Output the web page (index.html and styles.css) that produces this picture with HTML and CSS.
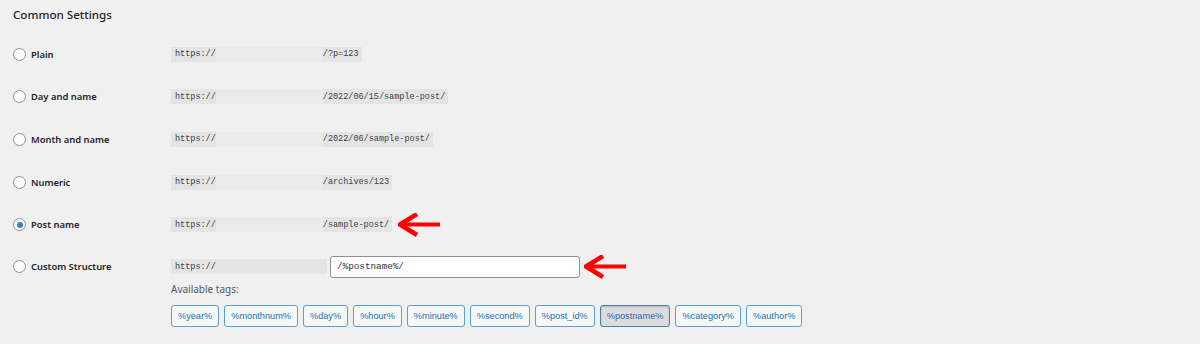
FILE: index.html
```html
<!DOCTYPE html>
<html lang="en">
<head>
    <meta charset="UTF-8">
    <meta name="viewport" content="width=device-width, initial-scale=1.0">
    <title>Permalink Settings</title>
    <link rel="stylesheet" href="styles.css">
</head>
<body>
    <div class="wrap">
        <h2 class="title">Common Settings</h2>

        <div class="row">
            <label class="choice"><span class="radio"></span>Plain</label>
            <code class="url">https://<span class="host"></span>/?p=123</code>
        </div>

        <div class="row">
            <label class="choice"><span class="radio"></span>Day and name</label>
            <code class="url">https://<span class="host"></span>/2022/06/15/sample-post/</code>
        </div>

        <div class="row">
            <label class="choice"><span class="radio"></span>Month and name</label>
            <code class="url">https://<span class="host"></span>/2022/06/sample-post/</code>
        </div>

        <div class="row">
            <label class="choice"><span class="radio"></span>Numeric</label>
            <code class="url">https://<span class="host"></span>/archives/123</code>
        </div>

        <div class="row">
            <label class="choice"><span class="radio checked"></span>Post name</label>
            <code class="url">https://<span class="host"></span>/sample-post/</code>
            <svg class="arrow" width="44" height="24" viewBox="0 0 44 24">
                <path d="M42 11.5 H6" stroke="#f00" stroke-width="4" fill="none"/>
                <path d="M19 1 L2 11.5 L19 22" stroke="#f00" stroke-width="4.5" fill="none" stroke-linejoin="miter"/>
            </svg>
        </div>

        <div class="custom">
            <div class="custom-line">
                <label class="choice"><span class="radio"></span>Custom Structure</label>
                <code class="url base">https://</code>
                <input class="structure" type="text" value="/%postname%/">
                <svg class="arrow arrow-input" width="44" height="24" viewBox="0 0 44 24">
                    <path d="M42 11.5 H6" stroke="#f00" stroke-width="4" fill="none"/>
                    <path d="M19 1 L2 11.5 L19 22" stroke="#f00" stroke-width="4.5" fill="none" stroke-linejoin="miter"/>
                </svg>
            </div>
            <div class="tags-block">
                <p class="tags-label">Available tags:</p>
                <div class="tags">
                    <button class="tag">%year%</button>
                    <button class="tag">%monthnum%</button>
                    <button class="tag">%day%</button>
                    <button class="tag">%hour%</button>
                    <button class="tag">%minute%</button>
                    <button class="tag">%second%</button>
                    <button class="tag">%post_id%</button>
                    <button class="tag active">%postname%</button>
                    <button class="tag">%category%</button>
                    <button class="tag">%author%</button>
                </div>
            </div>
        </div>
    </div>
</body>
</html>
```

FILE: styles.css
```css
body {
    margin: 0;
    background-color: #f0f0f1;
    font-family: "Noto Sans", "Open Sans", sans-serif;
    color: #1d2327;
}
.wrap {
    padding-left: 13px;
    height: 344px;
}
.title {
    margin: 0;
    height: 33px;
    padding-top: 5px;
    box-sizing: border-box;
    font-size: 11.6px;
    font-weight: 500;
    line-height: 20px;
    color: #1d2327;
}
.row {
    display: flex;
    align-items: center;
    height: 42.6px;
}
.choice {
    display: flex;
    align-items: center;
    width: 158px;
    flex-shrink: 0;
    font-size: 9.4px;
    font-weight: 600;
    color: #1d2327;
}
.radio {
    width: 11px;
    height: 11px;
    border: 1px solid #8c8f94;
    border-radius: 50%;
    background-color: #fff;
    margin-right: 5px;
    position: relative;
}
.radio.checked::after {
    content: "";
    position: absolute;
    left: 2.5px;
    top: 2.5px;
    width: 6px;
    height: 6px;
    border-radius: 50%;
    background-color: #3582c4;
}
.url {
    display: inline-flex;
    align-items: center;
    height: 15px;
    padding: 0 3px 0 4px;
    background-color: #e4e4e4;
    font-family: "Liberation Mono", "DejaVu Sans Mono", monospace;
    font-size: 8.5px;
    color: #3c434a;
    white-space: pre;
}
.host {
    display: inline-block;
    width: 107px;
    height: 15px;
    background-color: #eaeaea;
}
.url.base {
    width: 156px;
    box-sizing: border-box;
}
.arrow {
    margin-left: 6px;
}
.custom {
    padding-top: 10px;
}
.custom-line {
    display: flex;
    align-items: center;
    height: 22px;
}
.structure {
    width: 250px;
    height: 22px;
    box-sizing: border-box;
    margin: 0 0 0 3px;
    padding: 0 6px;
    border: 1px solid #8c8f94;
    border-radius: 3px;
    background-color: #fff;
    font-family: "Liberation Mono", "DejaVu Sans Mono", monospace;
    font-size: 9.3px;
    color: #2c3338;
}
.arrow-input {
    margin-left: 4px;
}
.tags-block {
    margin-left: 158px;
}
.tags-label {
    margin: 3px 0 8px;
    font-size: 10px;
    line-height: 16px;
    color: #50575e;
}
.tags {
    display: flex;
    gap: 5px;
}
.tag {
    height: 22px;
    padding: 0 6px;
    border: 1px solid #5b9dd9;
    border-radius: 3px;
    background-color: #f6f7f7;
    font-family: "Liberation Sans", Arial, sans-serif;
    font-size: 9.2px;
    color: #2271b1;
}
.tag.active {
    background-color: #dcdcde;
    border-color: #4f7eaf;
    color: #2c6aa8;
    box-shadow: inset 0 1px 2px rgba(0,0,0,0.15);
}
```
